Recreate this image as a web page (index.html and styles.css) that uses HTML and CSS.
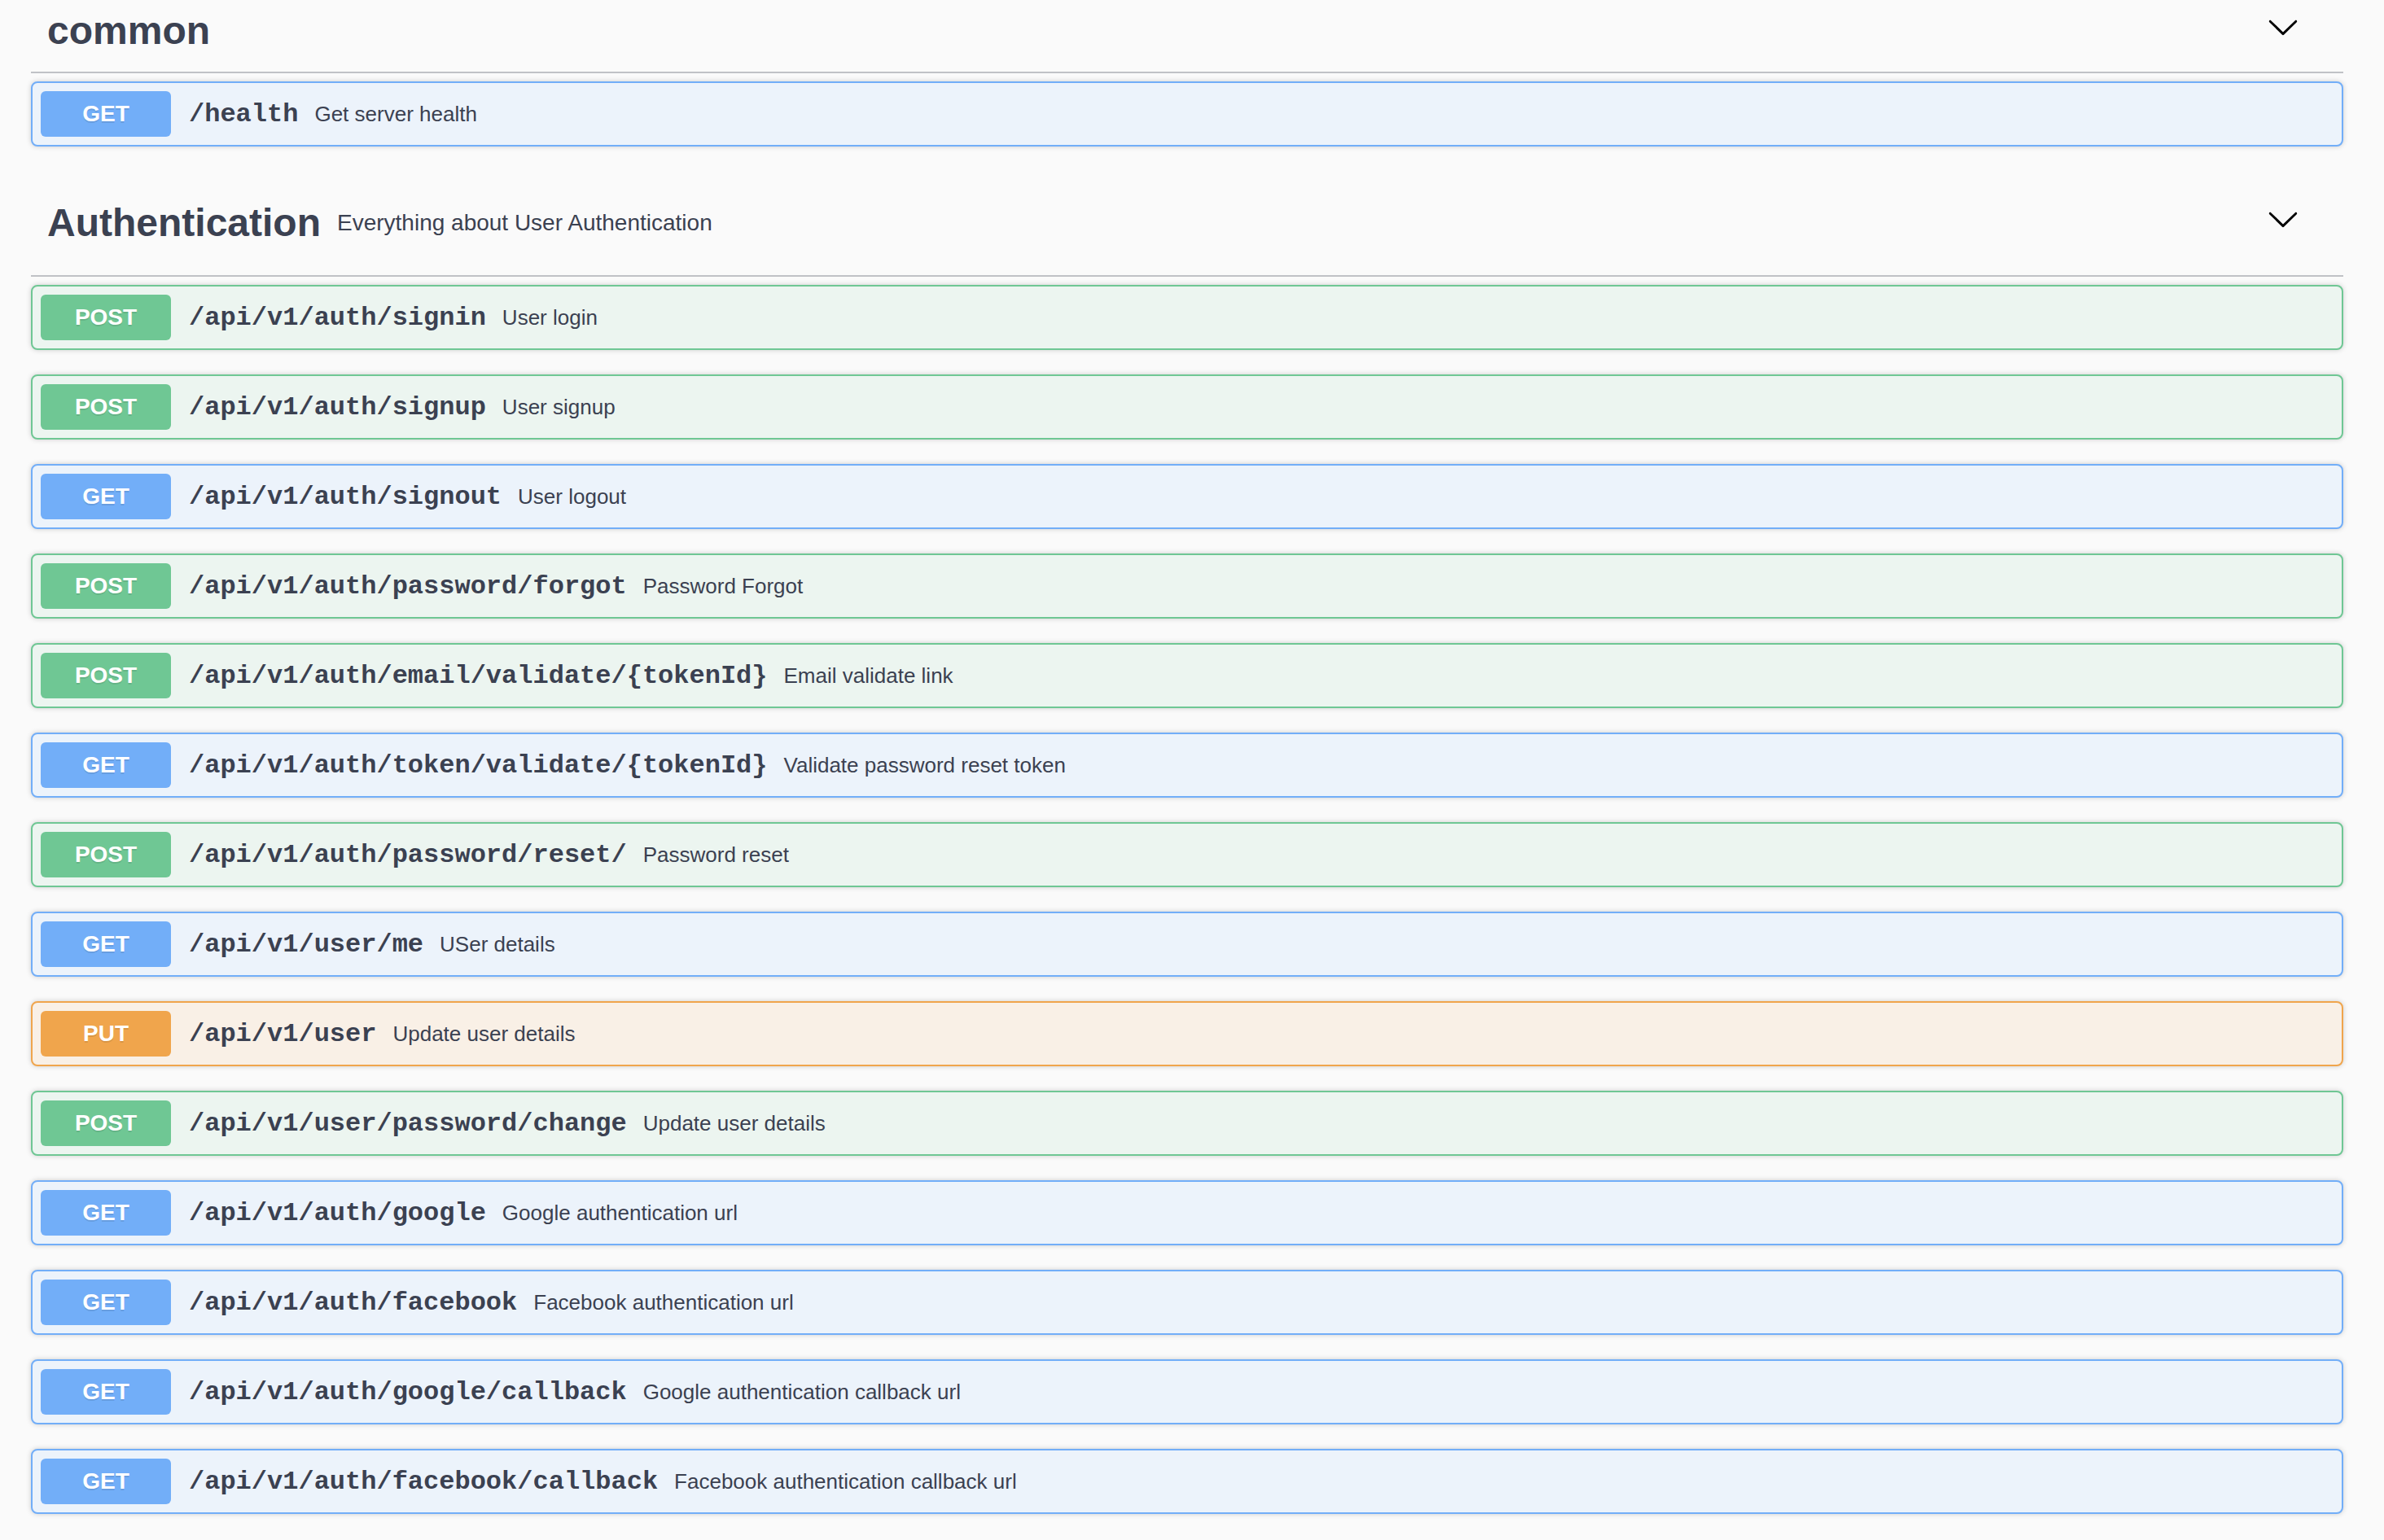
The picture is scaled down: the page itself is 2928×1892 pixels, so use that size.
FILE: index.html
```html
<!DOCTYPE html>
<html lang="en">
<head>
<meta charset="utf-8">
<title>API</title>
<link rel="stylesheet" href="styles.css">
</head>
<body>
<div class="wrapper">
  <section class="tag-section">
    <h3 class="tag-header">
      <a class="tag-name">common</a>
      <span class="spacer"></span>
      <button class="expand" type="button">
        <svg class="arrow" width="40" height="40" viewBox="0 0 20 20"><path d="M17.418 6.109c.272-.268.709-.268.979 0s.271.701 0 .969l-7.908 7.83c-.27.268-.707.268-.979 0l-7.908-7.83c-.27-.268-.27-.701 0-.969.271-.268.709-.268.979 0L10 13.25l7.418-7.141z"/></svg>
      </button>
    </h3>
    <div class="ops">
      <div class="opblock get"><div class="summary"><span class="method">GET</span><span class="path">/health</span><span class="desc">Get server health</span></div></div>
    </div>
  </section>

  <section class="tag-section">
    <h3 class="tag-header has-desc">
      <a class="tag-name">Authentication</a>
      <small class="tag-desc"><span class="tag-desc-text">Everything about User Authentication</span></small>
      <button class="expand" type="button">
        <svg class="arrow" width="40" height="40" viewBox="0 0 20 20"><path d="M17.418 6.109c.272-.268.709-.268.979 0s.271.701 0 .969l-7.908 7.83c-.27.268-.707.268-.979 0l-7.908-7.830c-.27-.268-.27-.701 0-.969.271-.268.709-.268.979 0L10 13.25l7.418-7.141z"/></svg>
      </button>
    </h3>
    <div class="ops">
      <div class="opblock post"><div class="summary"><span class="method">POST</span><span class="path">/api/v1/auth/signin</span><span class="desc">User login</span></div></div>
      <div class="opblock post"><div class="summary"><span class="method">POST</span><span class="path">/api/v1/auth/signup</span><span class="desc">User signup</span></div></div>
      <div class="opblock get"><div class="summary"><span class="method">GET</span><span class="path">/api/v1/auth/signout</span><span class="desc">User logout</span></div></div>
      <div class="opblock post"><div class="summary"><span class="method">POST</span><span class="path">/api/v1/auth/password/forgot</span><span class="desc">Password Forgot</span></div></div>
      <div class="opblock post"><div class="summary"><span class="method">POST</span><span class="path">/api/v1/auth/email/validate/{tokenId}</span><span class="desc">Email validate link</span></div></div>
      <div class="opblock get"><div class="summary"><span class="method">GET</span><span class="path">/api/v1/auth/token/validate/{tokenId}</span><span class="desc">Validate password reset token</span></div></div>
      <div class="opblock post"><div class="summary"><span class="method">POST</span><span class="path">/api/v1/auth/password/reset/</span><span class="desc">Password reset</span></div></div>
      <div class="opblock get"><div class="summary"><span class="method">GET</span><span class="path">/api/v1/user/me</span><span class="desc">USer details</span></div></div>
      <div class="opblock put"><div class="summary"><span class="method">PUT</span><span class="path">/api/v1/user</span><span class="desc">Update user details</span></div></div>
      <div class="opblock post"><div class="summary"><span class="method">POST</span><span class="path">/api/v1/user/password/change</span><span class="desc">Update user details</span></div></div>
      <div class="opblock get"><div class="summary"><span class="method">GET</span><span class="path">/api/v1/auth/google</span><span class="desc">Google authentication url</span></div></div>
      <div class="opblock get"><div class="summary"><span class="method">GET</span><span class="path">/api/v1/auth/facebook</span><span class="desc">Facebook authentication url</span></div></div>
      <div class="opblock get"><div class="summary"><span class="method">GET</span><span class="path">/api/v1/auth/google/callback</span><span class="desc">Google authentication callback url</span></div></div>
      <div class="opblock get"><div class="summary"><span class="method">GET</span><span class="path">/api/v1/auth/facebook/callback</span><span class="desc">Facebook authentication callback url</span></div></div>
    </div>
  </section>
</div>
</body>
</html>
```

FILE: styles.css
```css
html, body {
  margin: 0;
  padding: 0;
  background: #fafafa;
}

body {
  font-family: "Liberation Sans", Arial, sans-serif;
  color: #3b4151;
  overflow: hidden;
}

.wrapper {
  margin: -12px 50px 0 38px;
}

.tag-section {
  display: flex;
  flex-direction: column;
}

.tag-header {
  display: flex;
  align-items: center;
  margin: 0 0 10px;
  padding: 20px 40px 20px 20px;
  border-bottom: 2px solid rgba(59, 65, 81, 0.3);
  font-family: "Liberation Sans", Arial, sans-serif;
  font-size: 48px;
  font-weight: 700;
  color: #3b4151;
}

.tag-name {
  line-height: 60px;
  color: #3b4151;
  text-decoration: none;
}

.spacer {
  flex: 1;
}

.tag-desc {
  flex: 1;
  padding: 0 20px;
  font-size: 28px;
  font-weight: 400;
  line-height: 88px;
  color: #3b4151;
}

.expand {
  display: flex;
  align-items: center;
  justify-content: center;
  margin: 0 0 10px;
  padding: 0 14px 0 20px;
  border: none;
  background: none;
  cursor: pointer;
}

.arrow {
  display: block;
  fill: #000;
}

.ops {
  display: flex;
  flex-direction: column;
}

.opblock {
  margin: 0 0 30px;
  border: 2px solid #000;
  border-radius: 8px;
  box-shadow: 0 0 6px rgba(0, 0, 0, 0.19);
}

.summary {
  display: flex;
  align-items: center;
  padding: 10px;
}

.method {
  min-width: 160px;
  padding: 12px 0;
  border-radius: 6px;
  font-family: "Liberation Sans", Arial, sans-serif;
  font-size: 28px;
  line-height: 32px;
  font-weight: 700;
  text-align: center;
  color: #fff;
  text-shadow: 0 2px 0 rgba(0, 0, 0, 0.1);
}

.path {
  padding: 0 20px 0 22px;
  font-family: "Liberation Mono", "Courier New", monospace;
  font-size: 32px;
  font-weight: 700;
  color: #3b4151;
  white-space: nowrap;
}

.desc {
  flex: 1 1 auto;
  font-family: "Liberation Sans", Arial, sans-serif;
  font-size: 26px;
  color: #3b4151;
}

.opblock.get {
  border-color: #72aef8;
  background: #ecf3fb;
}
.opblock.get .method {
  background: #72aef8;
}

.opblock.post {
  border-color: #6fc794;
  background: #ecf5f0;
}
.opblock.post .method {
  background: #6fc794;
}

.opblock.put {
  border-color: #f0a54c;
  background: #f9f0e6;
}
.opblock.put .method {
  background: #f0a54c;
}
```
